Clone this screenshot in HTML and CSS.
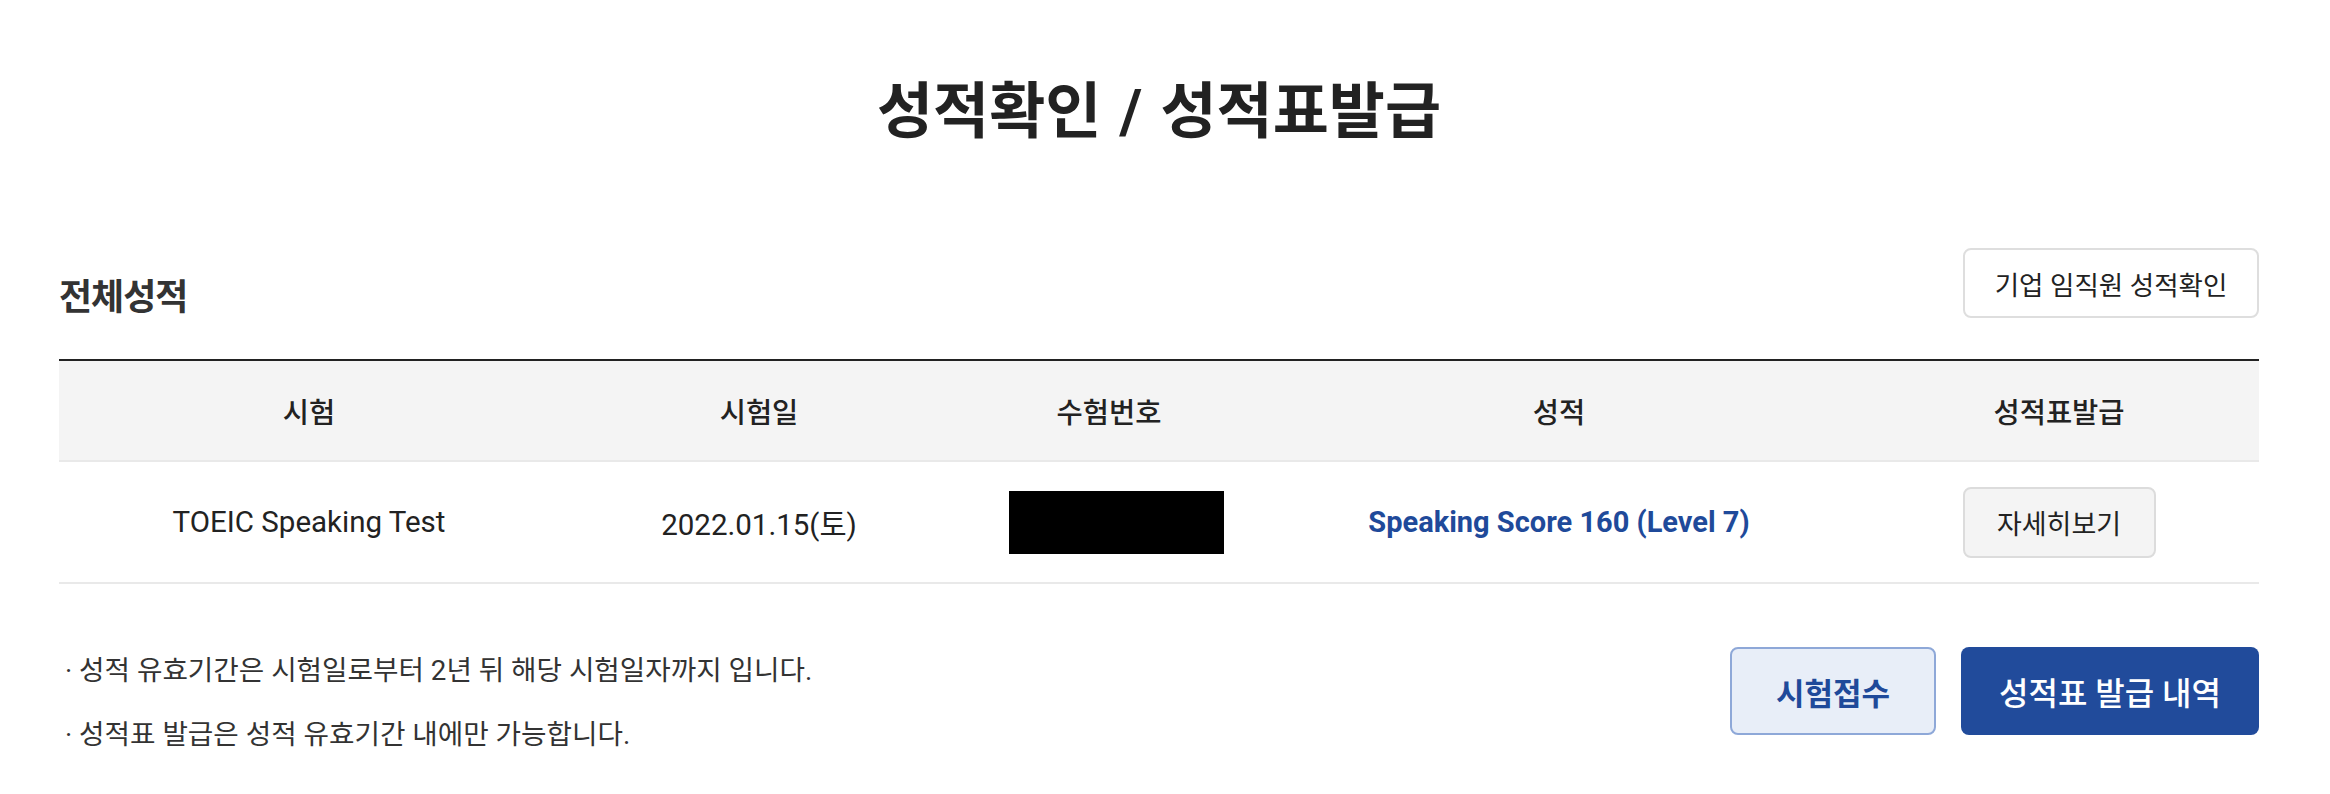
FILE: index.html
```html
<!DOCTYPE html>
<html lang="ko">
<head>
<meta charset="utf-8">
<title>성적확인 / 성적표발급</title>
<link rel="stylesheet" href="styles.css">
</head>
<body>
<div class="page">
  <h1 class="title">성적확인 / 성적표발급</h1>
  <div class="section-head">
    <h2 class="section-title">전체성적</h2>
    <button class="btn-outline">기업 임직원 성적확인</button>
  </div>
  <table class="score-table">
    <colgroup>
      <col class="c1"><col class="c2"><col class="c3"><col class="c4"><col class="c5">
    </colgroup>
    <thead>
      <tr>
        <th>시험</th>
        <th>시험일</th>
        <th>수험번호</th>
        <th>성적</th>
        <th>성적표발급</th>
      </tr>
    </thead>
    <tbody>
      <tr>
        <td>TOEIC Speaking Test</td>
        <td>2022.01.15(토)</td>
        <td><span class="masked"></span></td>
        <td><span class="score">Speaking Score 160 (Level 7)</span></td>
        <td><button class="btn-detail">자세히보기</button></td>
      </tr>
    </tbody>
  </table>
  <div class="bottom">
    <ul class="notes">
      <li>· 성적 유효기간은 시험일로부터 2년 뒤 해당 시험일자까지 입니다.</li>
      <li>· 성적표 발급은 성적 유효기간 내에만 가능합니다.</li>
    </ul>
    <div class="actions">
      <button class="btn-light">시험접수</button>
      <button class="btn-primary">성적표 발급 내역</button>
    </div>
  </div>
</div>
</body>
</html>
```

FILE: styles.css
```css
* { box-sizing: border-box; }
html, body { margin: 0; padding: 0; background: #fff; }
body {
  font-family: Roboto, "Noto Sans CJK KR", sans-serif;
  color: #222;
}
button { font-family: inherit; cursor: pointer; }

.page {
  width: 2200px;
  margin-left: 59px;
}

.title {
  margin: 0;
  padding-top: 76px;
  font-size: 61px;
  line-height: 72px;
  font-weight: 700;
  letter-spacing: 0;
  word-spacing: 3px;
  text-align: center;
  color: #222;
}

.section-head {
  display: flex;
  justify-content: space-between;
  align-items: flex-end;
  margin-top: 100px;
}
.section-title {
  margin: 0;
  font-size: 36px;
  line-height: 40px;
  font-weight: 700;
  letter-spacing: -1px;
  color: #333;
}
.btn-outline {
  width: 296px;
  height: 70px;
  border: 2px solid #dedede;
  border-radius: 8px;
  background: #fff;
  font-size: 26.5px;
  color: #222;
  padding: 0;
}

.score-table {
  width: 2200px;
  margin-top: 41px;
  border-collapse: collapse;
  table-layout: fixed;
  border-top: 2px solid #222;
}
.c1 { width: 500px; }
.c2 { width: 400px; }
.c3 { width: 300px; }
.c4 { width: 600px; }
.c5 { width: 400px; }

.score-table th {
  height: 101px;
  background: #f4f4f4;
  border-bottom: 2px solid #e9e9e9;
  font-size: 28.5px;
  font-weight: 500;
  color: #222;
  padding: 0;
}
.score-table td {
  height: 122px;
  border-bottom: 2px solid #e9e9e9;
  text-align: center;
  font-size: 29.5px;
  color: #222;
  padding: 0;
}
.masked {
  display: inline-block;
  width: 215px;
  height: 63px;
  background: #000;
  vertical-align: middle;
  margin-left: 14px;
}
.score {
  color: #1f4a9a;
  font-weight: 700;
  font-size: 29px;
}
.btn-detail {
  width: 193px;
  height: 71px;
  border: 2px solid #dcdcdc;
  border-radius: 8px;
  background: #f4f4f4;
  font-size: 27px;
  color: #222;
  padding: 0;
}

.bottom {
  display: flex;
  justify-content: space-between;
  align-items: flex-start;
  margin-top: 63px;
}
.notes {
  list-style: none;
  margin: 0;
  padding: 4px 0 0 6px;
}
.notes li {
  font-size: 27.7px;
  line-height: 40px;
  color: #333;
  margin-bottom: 24px;
}
.notes li:last-child { margin-bottom: 0; }

.actions {
  display: flex;
  gap: 25px;
}
.btn-light {
  width: 206px;
  height: 88px;
  border: 2px solid #8ea8d8;
  border-radius: 8px;
  background: #e8eef8;
  color: #1f4a9a;
  font-size: 31px;
  font-weight: 700;
  padding: 0;
}
.btn-primary {
  width: 298px;
  height: 88px;
  border: none;
  border-radius: 8px;
  background: #214b9b;
  color: #fff;
  font-size: 32px;
  font-weight: 500;
  padding: 0;
}
```
